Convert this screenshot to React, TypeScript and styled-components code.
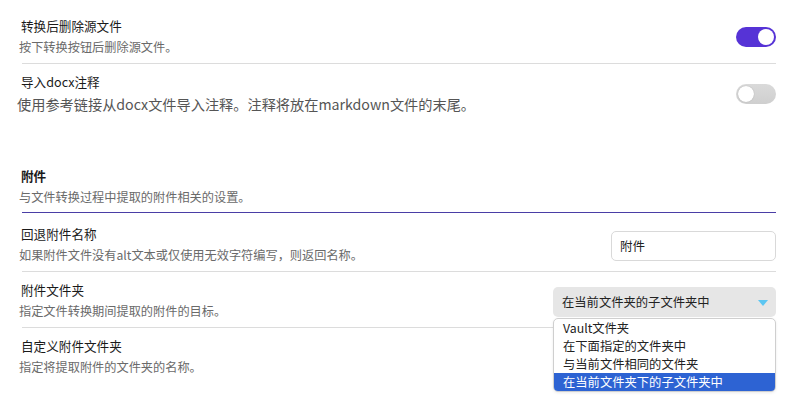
import React from "react";
import styled, { createGlobalStyle } from "styled-components";

const Global = createGlobalStyle`
  html, body { margin: 0; padding: 0; background: #fff; }
  body { font-family: "Noto Sans CJK SC", "Noto Sans", sans-serif; }
`;

const Page = styled.div`
  width: 788px;
  height: 408px;
  box-sizing: border-box;
  padding: 8px 12px 0 20px;
  display: flex;
  flex-direction: column;
  overflow: hidden;
`;

const Row = styled.div<{ $divider?: "none" | "light" | "accent"; $pb?: number; $pt?: number }>`
  display: flex;
  align-items: center;
  justify-content: space-between;
  padding: ${(p) => p.$pt ?? 9}px 0 ${(p) => p.$pb ?? 7}px 0;
  margin-left: 2px;
  border-bottom: ${(p) =>
    p.$divider === "accent"
      ? "1px solid #4a3ea6"
      : p.$divider === "light"
      ? "1px solid #dcdcdc"
      : "none"};
`;

const Info = styled.div`
  display: flex;
  flex-direction: column;
  gap: 3px;
  margin-left: -2px;
`;

const Title = styled.div<{ $strong?: boolean }>`
  font-size: 12.6px;
  line-height: 18px;
  color: #1a1a1a;
  font-weight: ${(p) => (p.$strong ? 700 : 400)};
  padding-left: 1px;
`;

const Desc = styled.div<{ $large?: boolean }>`
  font-size: ${(p) => (p.$large ? "14.2px" : "12.2px")};
  line-height: ${(p) => (p.$large ? "20px" : "18px")};
  color: ${(p) => (p.$large ? "#555" : "#6a6a6a")};
  margin-left: ${(p) => (p.$large ? "-3px" : "-1px")};
`;

const Spacer = styled.div<{ $h: number }>`
  height: ${(p) => p.$h}px;
`;

const ToggleTrack = styled.div<{ $on: boolean }>`
  width: 40px;
  height: 20px;
  border-radius: 10px;
  box-sizing: border-box;
  background: ${(p) => (p.$on ? "#5633d6" : "linear-gradient(#dadada, #cfcfcf)")};
  display: flex;
  align-items: center;
  justify-content: ${(p) => (p.$on ? "flex-end" : "flex-start")};
  padding: 2px;
  flex-shrink: 0;
`;

const Knob = styled.div<{ $on: boolean }>`
  width: 16px;
  height: 16px;
  border-radius: 50%;
  background: #fff;
  box-shadow: ${(p) => (p.$on ? "none" : "0 0 1px rgba(0,0,0,0.3)")};
`;

const Toggle = ({ on }: { on: boolean }) => (
  <ToggleTrack $on={on}>
    <Knob $on={on} />
  </ToggleTrack>
);

const TextInput = styled.div`
  width: 165px;
  height: 30px;
  box-sizing: border-box;
  border: 1px solid #d9d9d9;
  border-radius: 5px;
  display: flex;
  align-items: center;
  padding-left: 8px;
  font-size: 12.5px;
  color: #222;
  flex-shrink: 0;
  margin-top: 2px;
`;

const SelectWrap = styled.div`
  position: relative;
  flex-shrink: 0;
  margin-top: 2px;
`;

const SelectBox = styled.div`
  width: 223px;
  height: 30px;
  box-sizing: border-box;
  background: #e6e6e6;
  border-radius: 5px;
  display: flex;
  align-items: center;
  justify-content: space-between;
  padding: 0 8px 0 9px;
  font-size: 12.3px;
  color: #222;
`;

const Arrow = styled.div`
  width: 0;
  height: 0;
  border-left: 5px solid transparent;
  border-right: 5px solid transparent;
  border-top: 6px solid #5cc6f2;
  margin-top: 2px;
`;

const Menu = styled.div`
  position: absolute;
  top: 31px;
  left: 0;
  width: 223px;
  box-sizing: border-box;
  background: #fff;
  border: 1px solid #cfcfcf;
  border-radius: 5px;
  overflow: hidden;
  box-shadow: 0 1px 3px rgba(0, 0, 0, 0.08);
  z-index: 10;
`;

const Option = styled.div<{ $selected?: boolean }>`
  height: 18px;
  line-height: 18px;
  padding-left: 9px;
  font-size: 12.3px;
  color: ${(p) => (p.$selected ? "#fff" : "#222")};
  background: ${(p) => (p.$selected ? "#2d63d3" : "transparent")};
`;

export default function App() {
  return (
    <>
      <Global />
      <Page>
        <Row $divider="light">
          <Info>
            <Title>转换后删除源文件</Title>
            <Desc>按下转换按钮后删除源文件。</Desc>
          </Info>
          <Toggle on />
        </Row>
        <Row>
          <Info>
            <Title>导入docx注释</Title>
            <Desc $large>使用参考链接从docx文件导入注释。注释将放在markdown文件的末尾。</Desc>
          </Info>
          <Toggle on={false} />
        </Row>
        <Spacer $h={37} />
        <Row $divider="accent" $pb={6}>
          <Info>
            <Title $strong>附件</Title>
            <Desc>与文件转换过程中提取的附件相关的设置。</Desc>
          </Info>
        </Row>
        <Row $divider="light" $pt={12}>
          <Info>
            <Title>回退附件名称</Title>
            <Desc>如果附件文件没有alt文本或仅使用无效字符编写，则返回名称。</Desc>
          </Info>
          <TextInput>附件</TextInput>
        </Row>
        <Row $divider="light">
          <Info>
            <Title>附件文件夹</Title>
            <Desc>指定文件转换期间提取的附件的目标。</Desc>
          </Info>
          <SelectWrap>
            <SelectBox>
              <span>在当前文件夹的子文件夹中</span>
              <Arrow />
            </SelectBox>
            <Menu>
              <Option>Vault文件夹</Option>
              <Option>在下面指定的文件夹中</Option>
              <Option>与当前文件相同的文件夹</Option>
              <Option $selected>在当前文件夹下的子文件夹中</Option>
            </Menu>
          </SelectWrap>
        </Row>
        <Row>
          <Info>
            <Title>自定义附件文件夹</Title>
            <Desc>指定将提取附件的文件夹的名称。</Desc>
          </Info>
        </Row>
      </Page>
    </>
  );
}
